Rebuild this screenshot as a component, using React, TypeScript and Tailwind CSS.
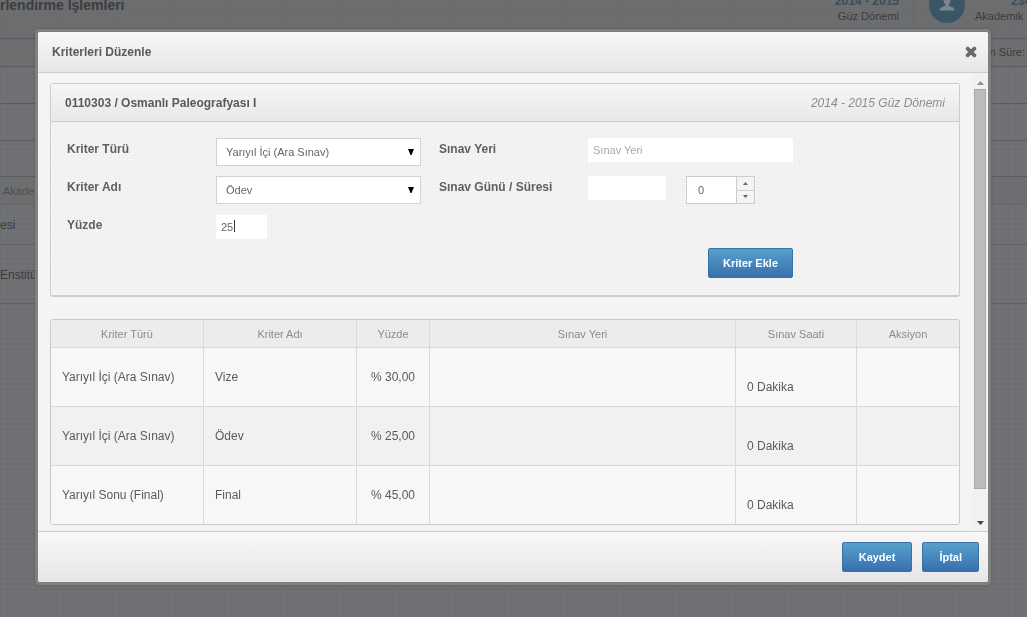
import type { ReactNode } from "react";
import { FaTimes } from "react-icons/fa";

type Criterion = {
  type: string;
  name: string;
  percent: string;
  place: string;
  date: string;
  duration: string;
};

const criteria: Criterion[] = [
  { type: "Yarıyıl İçi (Ara Sınav)", name: "Vize", percent: "% 30,00", place: "", date: "", duration: "0 Dakika" },
  { type: "Yarıyıl İçi (Ara Sınav)", name: "Ödev", percent: "% 25,00", place: "", date: "", duration: "0 Dakika" },
  { type: "Yarıyıl Sonu (Final)", name: "Final", percent: "% 45,00", place: "", date: "", duration: "0 Dakika" },
];

const columns = [
  { label: "Kriter Türü", width: "w-[152px]" },
  { label: "Kriter Adı", width: "w-[153px]" },
  { label: "Yüzde", width: "w-[73px]" },
  { label: "Sınav Yeri", width: "" },
  { label: "Sınav Saati", width: "w-[121px]" },
  { label: "Aksiyon", width: "w-[103px]" },
];

function BlueButton({ children, className = "px-4" }: { children: ReactNode; className?: string }) {
  return (
    <button
      type="button"
      className={`h-[30px] rounded-[2px] border border-[#3a70a8] bg-linear-to-b from-[#56a1cb] to-[#3a6fae] text-[11px] font-bold text-white ${className}`}
    >
      {children}
    </button>
  );
}

function Field({ id, label, children }: { id: string; label: string; children: ReactNode }) {
  return (
    <div className="flex h-7 items-start">
      <label htmlFor={id} className="w-[149px] shrink-0 text-xs leading-[22px] font-bold text-[#606060]">
        {label}
      </label>
      {children}
    </div>
  );
}

function SelectBox({ id, options }: { id: string; options: string[] }) {
  return (
    <div className="relative w-[205px]">
      <select
        id={id}
        className="h-7 w-full appearance-none border border-[#d0d3d5] bg-white pr-6 pl-[9px] text-[11px] text-[#666]"
      >
        {options.map((o) => (
          <option key={o}>{o}</option>
        ))}
      </select>
      <svg viewBox="0 0 6 6" className="pointer-events-none absolute top-[11px] right-[7px] size-[6px]">
        <path d="M0 0h6L3.500 6h-1z" fill="#000" />
      </svg>
    </div>
  );
}

// Dimmed page that stays behind the dialog
function PageBehind() {
  return (
    <div aria-hidden="true" className="text-[#3a3c3e]">
      <div className="flex h-[38px] items-start justify-between bg-[#6a6b6d]/60">
        <div className="text-sm leading-[11px] font-bold">rlendirme İşlemleri</div>
        <div className="flex h-6">
          <div className="pr-[14px] text-right">
            <div className="h-2 text-xs leading-[3px] font-bold text-[#3b4d5a]">2014 - 2015</div>
            <div className="text-[11px] leading-4">Güz Dönemi</div>
          </div>
          <div className="border-l border-[#626366] pl-[15px]">
            <svg viewBox="0 0 36 24" className="h-6 w-9">
              <circle cx="18" cy="5" r="18" fill="#3a5666" />
              <path
                d="M14.5 0h7c0 2-.8 3.400-1.700 4.300v1.500l4.200 1.700c1 .5 1.500 1.500 1.500 3h-15c0-1.500.5-2.500 1.500-3l4.200-1.700V4.300C15.300 3.400 14.500 2 14.500 0z"
                fill="#7d858a"
              />
            </svg>
          </div>
          <div className="w-[62px] overflow-hidden pl-[10px]">
            <div className="h-2 pl-9 text-xs leading-[3px] font-bold text-[#3b4d5a]">234</div>
            <div className="text-[11px] leading-4">Akademik</div>
          </div>
        </div>
      </div>
      <div className="h-7 border-t border-[#5a5b5e] bg-[#6a6b6e]/50 pr-0.5 text-right text-[11px] leading-[27px]">
        n Süre:
      </div>
      <div className="h-[37px] border-t border-[#5a5b5e]" />
      <div className="h-[37px] border-t border-[#5a5b5e]" />
      <div className="h-9 border-t border-[#5a5b5e]" />
      <div className="h-7 border-t border-[#5a5b5e] bg-[#6a6b6e]/50 pl-[3px] text-[11px] leading-7 text-[#4e4f52]">
        Akade
      </div>
      <div className="h-10 border-t border-[#66676a] text-xs leading-10">esi</div>
      <div className="h-[60px] border-t border-b border-[#626366] text-xs leading-[60px]">Enstitü</div>
    </div>
  );
}

function CriteriaForm() {
  return (
    <section className="rounded-[3px] border border-b-2 border-[#cdcdcd]">
      <div className="flex h-[38px] items-center justify-between border-b border-[#cdcdcd] bg-linear-to-b from-[#f6f6f6] to-[#e8e8e8] px-[14px]">
        <h3 className="text-xs font-bold">0110303 / Osmanlı Paleografyası I</h3>
        <em className="text-xs text-[#8d8d8d]">2014 - 2015 Güz Dönemi</em>
      </div>
      <form className="bg-[#f1f1f1] bg-[radial-gradient(#f6f6f6_1px,transparent_1px)] bg-[size:4px_3px] px-4 pt-4 pb-[17px]">
        <div className="flex gap-[18px]">
          <div className="flex flex-col gap-[10px]">
            <Field id="tur" label="Kriter Türü">
              <SelectBox id="tur" options={["Yarıyıl İçi (Ara Sınav)", "Yarıyıl Sonu (Final)"]} />
            </Field>
            <Field id="ad" label="Kriter Adı">
              <SelectBox id="ad" options={["Ödev", "Vize", "Final"]} />
            </Field>
            <Field id="yuzde" label="Yüzde">
              <div className="relative">
                <input
                  id="yuzde"
                  defaultValue="25"
                  className="peer h-6 w-[51px] bg-white px-[5px] text-[11px] text-[#666] outline-none"
                />
                <span className="pointer-events-none absolute top-[6px] left-[18px] h-3 w-px bg-[#333] peer-focus:hidden" />
              </div>
            </Field>
          </div>
          <div className="flex flex-col gap-[10px]">
            <Field id="yer" label="Sınav Yeri">
              <input
                id="yer"
                placeholder="Sınav Yeri"
                className="h-6 w-[205px] bg-white px-[5px] text-[11px] outline-none placeholder:text-[#a9a9a9]"
              />
            </Field>
            <Field id="gun" label="Sınav Günü / Süresi">
              <input id="gun" className="mr-5 h-6 w-[78px] bg-white px-[5px] text-[11px] outline-none" />
              <div className="flex h-7 w-[69px] border border-[#cdcdcd] bg-white">
                <input
                  aria-label="Süre"
                  defaultValue="0"
                  className="w-[49px] px-[11px] text-[11px] text-[#666] outline-none"
                />
                <div className="flex flex-1 flex-col border-l border-[#cdcdcd] bg-[#f4f4f4]">
                  <button type="button" aria-label="Artır" className="flex flex-1 items-center justify-center">
                    <svg viewBox="0 0 5 3" className="h-[3px] w-[5px]">
                      <path d="M0 3h5L2.500 0z" fill="#666" />
                    </svg>
                  </button>
                  <button
                    type="button"
                    aria-label="Azalt"
                    className="flex flex-1 items-center justify-center border-t border-[#cdcdcd]"
                  >
                    <svg viewBox="0 0 5 3" className="h-[3px] w-[5px]">
                      <path d="M0 0h5L2.500 3z" fill="#666" />
                    </svg>
                  </button>
                </div>
              </div>
            </Field>
            <BlueButton className="mt-[34px] self-end px-[14px]">Kriter Ekle</BlueButton>
          </div>
        </div>
      </form>
    </section>
  );
}

function CriteriaTable() {
  return (
    <div className="mt-[22px] overflow-hidden rounded-[3px] border border-[#c9c9c9]">
      <table className="w-full table-fixed border-separate border-spacing-0">
        <thead>
          <tr className="h-[27px] bg-[#ececec] text-[11px] text-[#8b8b8b]">
            {columns.map((c) => (
              <th key={c.label} className={`border-l border-[#d9d9d9] pt-0.5 font-normal first:border-l-0 ${c.width}`}>
                {c.label}
              </th>
            ))}
          </tr>
        </thead>
        <tbody>
          {criteria.map((c, i) => (
            <tr
              key={i}
              className="h-[59px] bg-[#f7f7f7] text-xs leading-5 even:bg-[#f1f1f1] *:border-t *:border-l *:border-[#d9d9d9] *:px-[11px] *:first:border-l-0"
            >
              <td>{c.type}</td>
              <td>{c.name}</td>
              <td className="text-center">{c.percent}</td>
              <td>{c.place}</td>
              <td>
                <div className="h-5">{c.date}</div>
                <div>{c.duration}</div>
              </td>
              <td />
            </tr>
          ))}
        </tbody>
      </table>
    </div>
  );
}

function ScrollRail() {
  return (
    <div className="flex w-[14px] shrink-0 flex-col items-center bg-[#f1f1f1]">
      <svg viewBox="0 0 7 4" className="mt-2 mb-1 h-1 w-[7px] shrink-0">
        <path d="M0 4h7L3.500 0z" fill="#8f8f8f" />
      </svg>
      <div className="w-3 flex-1 border border-[#a8a8a8] bg-[#bcbcbc]" />
      <svg viewBox="0 0 7 4" className="mt-8 mb-[6px] h-1 w-[7px] shrink-0">
        <path d="M0 0h7L3.500 4z" fill="#444" />
      </svg>
    </div>
  );
}

export default function App() {
  return (
    <div className="min-h-screen bg-[#6f7073] bg-[repeating-linear-gradient(0deg,#ffffff05_0_1px,transparent_1px_5px),repeating-linear-gradient(90deg,#00000005_0_1px,transparent_1px_7px)] font-['Liberation_Sans',Arial,sans-serif] text-[#5a5a5a]">
      <PageBehind />
      <div className="fixed inset-0 pt-[29px] pr-9 pl-[35px]">
        <div
          role="dialog"
          aria-labelledby="dialog-title"
          className="overflow-hidden rounded-[4px] border-[3px] border-[#808080] bg-[#808080] shadow-[0_0_3px_#00000033]"
        >
          <div className="overflow-hidden rounded-[2px] bg-[#f4f4f4]">
            <header className="flex h-[41px] items-center justify-between border-b border-[#cdcdcd] bg-linear-to-b from-[#f8f8f8] to-[#e6e6e6] pr-[10px] pl-[14px]">
              <h2 id="dialog-title" className="text-xs font-bold">
                Kriterleri Düzenle
              </h2>
              <button type="button" aria-label="Kapat" className="text-[#6a6a6a]">
                <FaTimes className="size-[14px] stroke-current stroke-[40]" />
              </button>
            </header>
            <div className="flex pr-px pl-3">
              <div className="flex-1 pt-[10px] pr-[13px] pb-[6px]">
                <CriteriaForm />
                <CriteriaTable />
              </div>
              <ScrollRail />
            </div>
            <footer className="flex h-[51px] items-center justify-end gap-[10px] border-t border-[#cdcdcd] bg-linear-to-b from-[#f8f8f8] to-[#e6e6e6] pr-[9px]">
              <BlueButton>Kaydet</BlueButton>
              <BlueButton>İptal</BlueButton>
            </footer>
          </div>
        </div>
      </div>
    </div>
  );
}
